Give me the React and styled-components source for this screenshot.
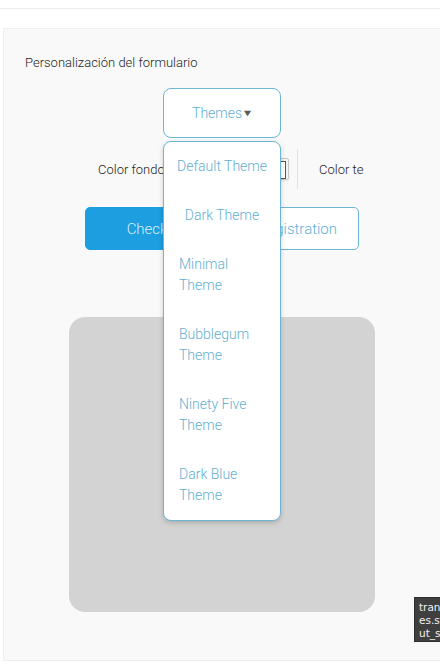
import React from "react";
import styled, { createGlobalStyle } from "styled-components";

const GlobalStyle = createGlobalStyle`
  html, body {
    margin: 0;
    padding: 0;
    background: #ffffff;
    font-family: Roboto, "Liberation Sans", sans-serif;
    overflow: hidden;
  }
  * { box-sizing: border-box; }
`;

const Page = styled.div`
  position: relative;
  width: 440px;
  height: 664px;
  overflow: hidden;
`;

const TopBar = styled.div`
  height: 9px;
  border-bottom: 1px solid #ececec;
`;

const Panel = styled.div`
  margin: 19px 0 0 3px;
  width: 450px;
  height: 633px;
  background: #f9f9f9;
  border: 1px solid #efefef;
  padding-top: 26px;
`;

const Title = styled.div`
  padding-left: 21px;
  font-size: 13px;
  line-height: 16px;
  font-weight: 300;
  color: #1e1e1e;
`;

const Column = styled.div`
  margin-left: 65px;
  width: 306px;
  display: flex;
  flex-direction: column;
  align-items: center;
`;

const ThemesWrap = styled.div`
  position: relative;
  margin-top: 17px;
  width: 118px;
  z-index: 5;
`;

const ThemesButton = styled.div`
  height: 50px;
  border: 1px solid #6cb6d4;
  border-radius: 8px;
  background: #fff;
  display: flex;
  align-items: center;
  justify-content: center;
  font-size: 14px;
  font-weight: 300;
  color: #5fb0d6;
`;

const Caret = styled.span`
  font-size: 9px;
  color: #5a5a5a;
  margin-left: 1px;
  position: relative;
  top: 0;
  transform: scaleX(1.35);
  display: inline-block;
`;

const Menu = styled.div`
  position: absolute;
  top: 53px;
  left: 0;
  width: 118px;
  background: #fff;
  border: 1px solid #6cb6d4;
  border-radius: 8px;
  box-shadow: 0 2px 5px rgba(0, 0, 0, 0.18);
  display: flex;
  flex-direction: column;
`;

const MenuItem = styled.div`
  padding: 14px 15px;
  font-size: 14px;
  line-height: 21px;
  font-weight: 300;
  color: #62afd2;
  text-align: ${({ $center }) => ($center ? "center" : "left")};
  white-space: ${({ $center }) => ($center ? "nowrap" : "normal")};
  margin: ${({ $center }) => ($center ? "0 -6px" : "0")};
`;

const ColorRow = styled.div`
  align-self: flex-start;
  margin-left: 29px;
  margin-top: 11px;
  width: 266px;
  height: 40px;
  overflow: hidden;
  display: flex;
  align-items: center;
  white-space: nowrap;
  & > * { flex-shrink: 0; }
`;

const ColorLabel = styled.span`
  font-size: 13px;
  font-weight: 300;
  color: #1e1e1e;
  min-width: ${({ $w }) => $w || "auto"};
`;

const Swatch = styled.div`
  width: 30px;
  height: 22px;
  border: 1px solid #c9c9c9;
  border-radius: 2px;
  background: #f3f3f3;
  padding: 2px;
  box-shadow: 0 1px 2px rgba(0, 0, 0, 0.08);
  &::after {
    content: "";
    display: block;
    height: 100%;
    border: 1px solid #555;
    background: #fff;
  }
`;

const Divider = styled.div`
  width: 1px;
  height: 40px;
  background: #e2e2e2;
  margin: 0 21px 0 8px;
`;

const ButtonRow = styled.div`
  align-self: flex-start;
  margin-left: 16px;
  margin-top: 18px;
  display: flex;
  gap: 11px;
`;

const Button = styled.div`
  width: ${({ $w }) => $w}px;
  height: 43px;
  border-radius: 5px;
  display: flex;
  align-items: center;
  justify-content: center;
  font-size: 15px;
  font-weight: 300;
  background: ${({ $primary }) => ($primary ? "#1d9ee0" : "#fff")};
  color: ${({ $primary }) => ($primary ? "#d9effb" : "#5fb0d6")};
  border: 1px solid ${({ $primary }) => ($primary ? "#1d9ee0" : "#6cb6d4")};
`;

const Preview = styled.div`
  margin-top: 67px;
  width: 306px;
  height: 295px;
  background: #d3d3d3;
  border-radius: 16px;
`;

const Tooltip = styled.div`
  position: absolute;
  left: 414px;
  top: 597px;
  width: 60px;
  height: 45px;
  background: #3f3f3f;
  border: 1px solid #2e2e2e;
  color: #f2f2f2;
  font-family: "DejaVu Sans", sans-serif;
  font-size: 10.5px;
  line-height: 13px;
  padding: 3px 4px;
  white-space: pre;
`;

const themes = [
  { name: "Default Theme", center: true },
  { name: "Dark Theme", center: true },
  { name: "Minimal Theme" },
  { name: "Bubblegum Theme" },
  { name: "Ninety Five Theme" },
  { name: "Dark Blue Theme" },
];

export default function App() {
  return (
    <Page>
      <GlobalStyle />
      <TopBar />
      <Panel>
        <Title>Personalización del formulario</Title>
        <Column>
          <ThemesWrap>
            <ThemesButton>
              Themes<Caret>▼</Caret>
            </ThemesButton>
            <Menu>
              {themes.map((t) => (
                <MenuItem key={t.name} $center={t.center}>
                  {t.name}
                </MenuItem>
              ))}
            </Menu>
          </ThemesWrap>
          <ColorRow>
            <ColorLabel $w="161px">Color fondo</ColorLabel>
            <Swatch />
            <Divider />
            <ColorLabel>Color texto</ColorLabel>
          </ColorRow>
          <ButtonRow>
            <Button $primary $w={140}>Check In</Button>
            <Button $w={123}>Registration</Button>
          </ButtonRow>
          <Preview />
        </Column>
      </Panel>
      <Tooltip>{"transl\nes.sty\nut_st"}</Tooltip>
    </Page>
  );
}
